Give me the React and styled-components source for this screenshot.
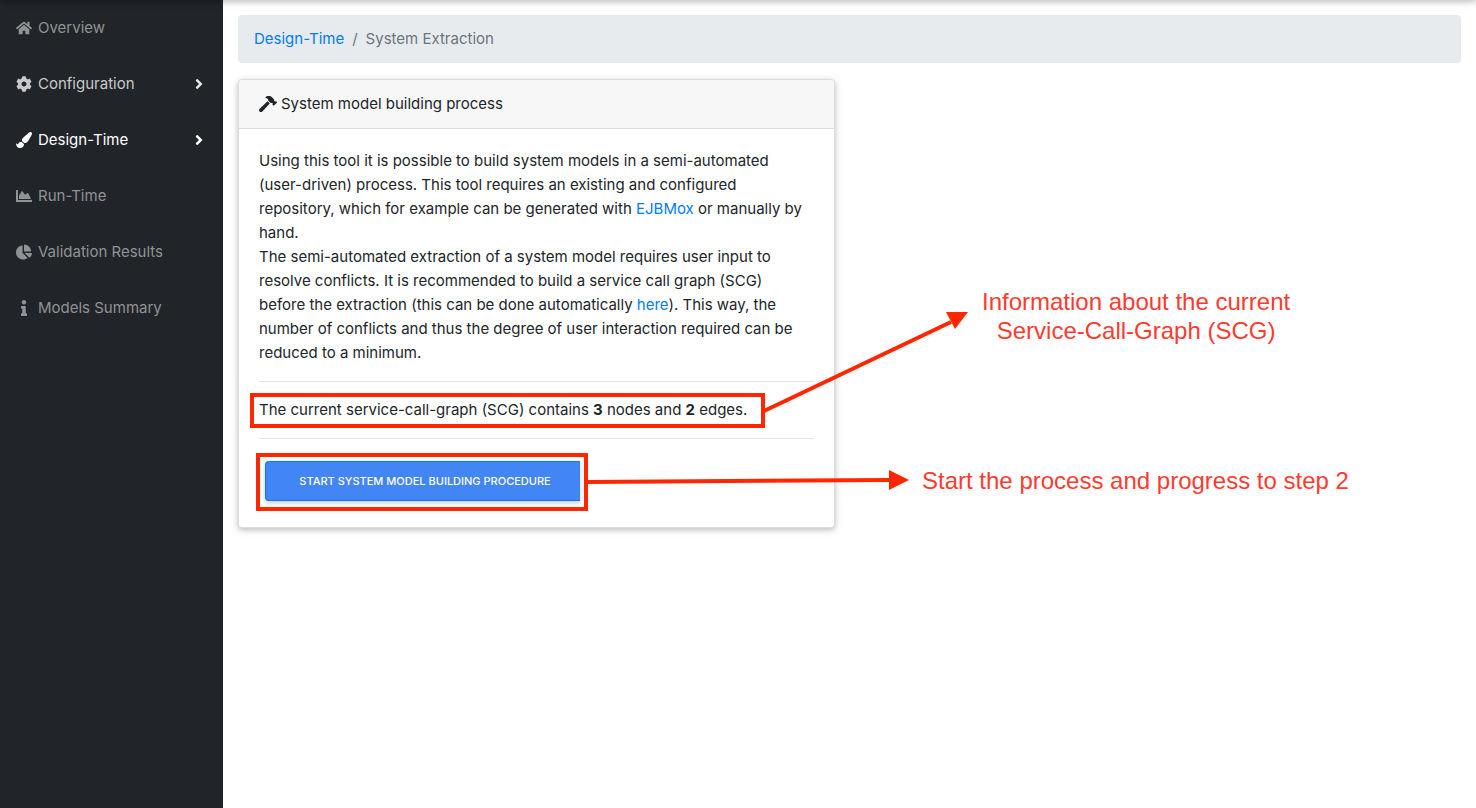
import React from "react";
import styled, { createGlobalStyle } from "styled-components";
import {
  FaHome,
  FaCog,
  FaPaintBrush,
  FaChartArea,
  FaChartPie,
  FaInfo,
  FaHammer,
  FaAngleRight,
} from "react-icons/fa";

const GlobalStyle = createGlobalStyle`
  *, *::before, *::after { box-sizing: border-box; }
  body {
    margin: 0;
    background: #fff;
    color: #212529;
    font-family: Inter, Roboto, "Liberation Sans", sans-serif;
    font-size: 15px;
    line-height: 24px;
  }
  a { text-decoration: none; }
`;

const Page = styled.div`
  position: relative;
  display: flex;
  min-height: 100vh;
  overflow: hidden;
`;

const TopBarShadow = styled.div`
  position: absolute;
  inset: -10px 0 auto 0;
  height: 10px;
  z-index: 2;
  box-shadow: 0 2px 5px rgba(0, 0, 0, 0.16), 0 2px 10px rgba(0, 0, 0, 0.12);
`;

const Sidebar = styled.nav`
  flex: 0 0 223px;
  background: #212529;
`;

const NavList = styled.ul`
  margin: 0;
  padding: 0;
  list-style: none;
`;

const tones = {
  muted: "#909294",
  open: "#c8c9ca",
  active: "#ffffff",
};

const NavLink = styled.a`
  display: flex;
  align-items: center;
  gap: 4px;
  height: 56px;
  padding: 0 16px 1px 14px;
  color: ${({ $tone }) => tones[$tone]};
`;

const NavIcon = styled.span`
  display: flex;
  justify-content: center;
  width: 20px;
  font-size: 16px;
`;

const NavArrow = styled(FaAngleRight)`
  margin-left: auto;
  font-size: 16px;
  color: ${({ $tone }) => ($tone === "active" ? "#fff" : "#e4e5e5")};
`;

const Main = styled.main`
  flex: 1;
  min-width: 0;
  padding: 15px;
`;

const Breadcrumb = styled.ol`
  display: flex;
  gap: 8px;
  margin: 0 0 16px;
  padding: 12px 16px;
  list-style: none;
  border-radius: 4px;
  background: #e8ebee;
  color: #6c757d;
`;

const Link = styled.a`
  color: #007bff;
`;

const Row = styled.div`
  position: relative;
  display: grid;
  grid-template-columns: 1fr 1fr;
  gap: 30px;
`;

const Card = styled.section`
  border: 1px solid #dcdcdc;
  border-radius: 4px;
  background: #fff;
  box-shadow: 0 2px 5px rgba(0, 0, 0, 0.16), 0 2px 10px rgba(0, 0, 0, 0.12);
`;

const CardHeader = styled.header`
  display: flex;
  align-items: center;
  gap: 4px;
  padding: 12px 20px;
  border-bottom: 1px solid #dcdcdc;
  background: #f7f7f7;
  border-radius: 3px 3px 0 0;
`;

const HammerIcon = styled(FaHammer)`
  font-size: 18px;
`;

const CardBody = styled.div`
  padding: 20px;
`;

const Text = styled.p`
  margin: 0;
  white-space: nowrap;
`;

const Rule = styled.hr`
  margin: 16px 0;
  border: 0;
  border-top: 1px solid #e5e5e5;
`;

const Highlight = styled.div`
  position: relative;
  display: flex;
  width: max-content;

  &::after {
    content: "";
    position: absolute;
    inset: ${({ $inset }) => $inset};
    border: 4px solid #ff2600;
    pointer-events: none;
  }
`;

const StartButton = styled.button`
  width: 315px;
  height: 40px;
  margin: 6px 8px 6px 6px;
  padding: 0 0 0 4px;
  border: 1px solid #007bff;
  border-right: 0;
  border-radius: 4px 0 0 4px;
  background: #4285f4;
  color: #fff;
  font: 500 11px/16px Inter, Roboto, sans-serif;
  text-transform: uppercase;
  box-shadow: 0 2px 5px rgba(0, 0, 0, 0.2);
`;

const Arrows = styled.svg`
  position: absolute;
  left: 0;
  top: 0;
  pointer-events: none;
`;

const Note = styled.p`
  position: absolute;
  left: ${({ $left }) => $left}px;
  top: ${({ $top }) => $top}px;
  margin: 0;
  color: #ff3b30;
  font: 24px/29px "Liberation Sans", Arial, sans-serif;
  text-align: center;
  white-space: nowrap;
`;

const navItems = [
  { label: "Overview", Icon: FaHome, tone: "muted" },
  { label: "Configuration", Icon: FaCog, tone: "open", arrow: true },
  { label: "Design-Time", Icon: FaPaintBrush, tone: "active", arrow: true },
  { label: "Run-Time", Icon: FaChartArea, tone: "muted" },
  { label: "Validation Results", Icon: FaChartPie, tone: "muted" },
  { label: "Models Summary", Icon: FaInfo, tone: "muted" },
];

export default function App() {
  return (
    <Page>
      <GlobalStyle />
      <TopBarShadow />
      <Sidebar>
        <NavList>
          {navItems.map(({ label, Icon, tone, arrow }) => (
            <li key={label}>
              <NavLink href="#" $tone={tone}>
                <NavIcon>
                  <Icon />
                </NavIcon>
                <span>{label}</span>
                {arrow && <NavArrow $tone={tone} />}
              </NavLink>
            </li>
          ))}
        </NavList>
      </Sidebar>
      <Main>
        <Breadcrumb>
          <li>
            <Link href="#">Design-Time</Link>
          </li>
          <li aria-hidden="true">/</li>
          <li>System Extraction</li>
        </Breadcrumb>
        <Row>
          <Card>
            <CardHeader>
              <HammerIcon />
              <span>System model building process</span>
            </CardHeader>
            <CardBody>
              <Text>
                Using this tool it is possible to build system models in a semi-automated
                <br />
                (user-driven) process. This tool requires an existing and configured
                <br />
                repository, which for example can be generated with <Link href="#">EJBMox</Link> or manually by
                <br />
                hand.
              </Text>
              <Text>
                The semi-automated extraction of a system model requires user input to
                <br />
                resolve conflicts. It is recommended to build a service call graph (SCG)
                <br />
                before the extraction (this can be done automatically <Link href="#">here</Link>). This way, the
                <br />
                number of conflicts and thus the degree of user interaction required can be
                <br />
                reduced to a minimum.
              </Text>
              <Rule />
              <Highlight $inset="-5px -18px -6px -9px">
                <Text>
                  The current service-call-graph (SCG) contains <b>3</b> nodes and <b>2</b> edges.
                </Text>
              </Highlight>
              <Rule />
              <Highlight $inset="-2px 0 -4px -3px">
                <StartButton type="button">Start system model building procedure</StartButton>
              </Highlight>
            </CardBody>
          </Card>
          <Arrows width="740" height="449" viewBox="0 0 740 449" fill="#ff2600" stroke="none" aria-hidden="true">
            <path d="M526 332 L713 243" stroke="#ff2600" strokeWidth="4" />
            <path d="M730 233 L708 233 L717 250 Z" />
            <path d="M350 403 L652 401" stroke="#ff2600" strokeWidth="4" />
            <path d="M671 401 L651 391 L651 411 Z" />
          </Arrows>
          <Note $left={744} $top={208}>
            Information about the current
            <br />
            Service-Call-Graph (SCG)
          </Note>
          <Note $left={684} $top={387}>
            Start the process and progress to step 2
          </Note>
        </Row>
      </Main>
    </Page>
  );
}
